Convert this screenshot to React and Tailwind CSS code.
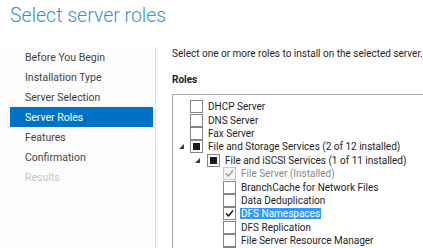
const steps = [
  { label: 'Before You Begin' },
  { label: 'Installation Type' },
  { label: 'Server Selection' },
  { label: 'Server Roles', active: true },
  { label: 'Features' },
  { label: 'Confirmation' },
  { label: 'Results', disabled: true },
];

const roles = [
  { label: 'DHCP Server', level: 0 },
  { label: 'DNS Server', level: 0 },
  { label: 'Fax Server', level: 0 },
  { label: 'File and Storage Services (2 of 12 installed)', level: 0, state: 'partial', expand: true },
  { label: 'File and iSCSI Services (1 of 11 installed)', level: 1, state: 'partial', expand: true },
  { label: 'File Server (Installed)', level: 2, state: 'installed' },
  { label: 'BranchCache for Network Files', level: 2 },
  { label: 'Data Deduplication', level: 2 },
  { label: 'DFS Namespaces', level: 2, state: 'checked', selected: true },
  { label: 'DFS Replication', level: 2 },
  { label: 'File Server Resource Manager', level: 2 },
  { label: 'File Server VSS Agent Service', level: 2 },
];

function Box({ state }) {
  return (
    <span
      className={
        'flex items-center justify-center w-[13px] h-[13px] shrink-0 border ' +
        (state === 'installed' ? 'border-[#c6c6c6] bg-[#f4f4f4]' : 'border-[#858585] bg-white')
      }
    >
      {state === 'partial' && <span className="w-[7px] h-[7px] bg-[#1a1a1a]" />}
      {(state === 'checked' || state === 'installed') && (
        <svg width="9" height="9" viewBox="0 0 9 9">
          <path
            d="M1 4.5 L3.5 7 L8 1.5"
            fill="none"
            stroke={state === 'installed' ? '#a0a0a0' : '#111'}
            strokeWidth="1.5"
          />
        </svg>
      )}
    </span>
  );
}

function Row({ role }) {
  const indent = ['pl-[4px]', 'pl-[21px]', 'pl-[37px]'][role.level];
  const tri = role.level === 0 ? 'ml-[2px]' : 'ml-[1px]';
  return (
    <div className={'flex items-center h-[13.4px] ' + indent}>
      <span className="w-[13px] shrink-0 flex items-center">
        {role.expand && (
          <svg className={tri} width="5" height="5" viewBox="0 0 5 5">
            <path d="M5 0 L5 5 L0 5 Z" fill="#3a3a3a" />
          </svg>
        )}
      </span>
      <Box state={role.state} />
      <span
        className={
          'ml-[4px] px-[1px] leading-[11px] whitespace-nowrap ' +
          (role.selected ? 'bg-[#3399ff] text-white' : '') +
          (role.state === 'installed' ? ' text-[#8a8a8a]' : '')
        }
      >
        {role.label}
      </span>
    </div>
  );
}

export default function App() {
  return (
    <div className="w-[423px] h-[248px] overflow-hidden bg-white text-[#1e1e1e] font-['Roboto',sans-serif]">
      <div className="h-[47px] pl-[10px] pt-[2px]">
        <h1 className="text-[19.5px] leading-[28px] font-light text-[#3592cf]">Select server roles</h1>
      </div>
      <div className="flex h-[201px]">
        <nav className="w-[156px] shrink-0 border-r border-[#dcdcdc] bg-[#fcfcfc] pl-[10px] pr-[2px]">
          {steps.map((s) => (
            <div
              key={s.label}
              className={
                'h-[20px] pl-[15px] pt-[1px] flex items-center text-[10.5px] ' +
                (s.active ? 'bg-[#0072c6] text-white' : s.disabled ? 'text-[#c4c4c4]' : 'text-[#444]')
              }
            >
              {s.label}
            </div>
          ))}
        </nav>
        <main className="flex-1 pl-[16px] text-[10px]">
          <p className="whitespace-nowrap leading-[14px]">Select one or more roles to install on the selected server.</p>
          <p className="font-bold leading-[14px] mt-[12px]">Roles</p>
          <div className="mt-[7px] border-l border-t border-[#adadad] pt-[5px] h-[200px]">
            {roles.map((r) => (
              <Row key={r.label} role={r} />
            ))}
          </div>
        </main>
      </div>
    </div>
  );
}
